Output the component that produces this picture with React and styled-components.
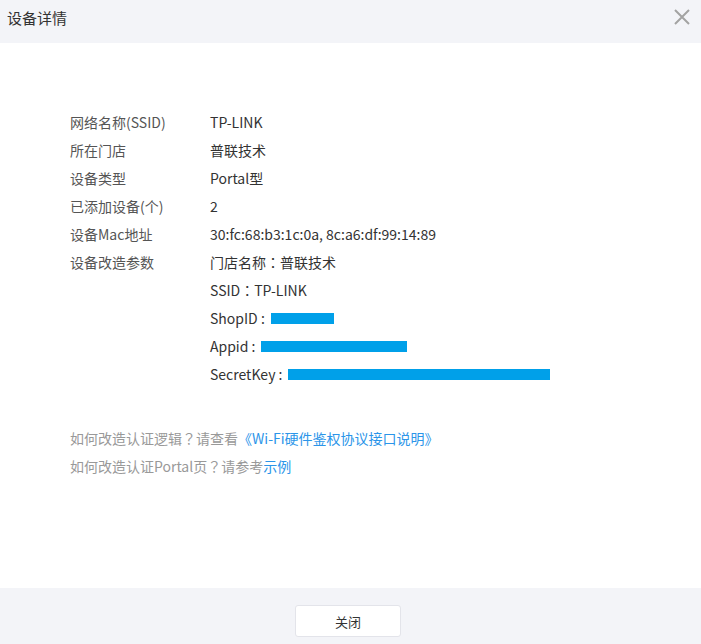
import React from 'react'
import styled, { createGlobalStyle } from 'styled-components'

const GlobalStyle = createGlobalStyle`
  html, body {
    margin: 0;
    padding: 0;
    background: #ffffff;
  }
  body {
    font-family: 'Noto Sans CJK SC', 'Noto Sans', sans-serif;
  }
`

const Dialog = styled.div`
  width: 701px;
  height: 644px;
  display: flex;
  flex-direction: column;
  background: #ffffff;
`

const Header = styled.div`
  height: 43px;
  flex: none;
  background: #f3f4f8;
  display: flex;
  align-items: center;
  justify-content: space-between;
  padding: 0 10px 0 7px;
  box-sizing: border-box;
`

const Title = styled.span`
  font-size: 15px;
  color: #333333;
  line-height: 20px;
  margin-top: -8px;
`

const CloseBtn = styled.button`
  background: transparent;
  border: none;
  padding: 0;
  width: 18px;
  height: 18px;
  margin-top: -10px;
  cursor: pointer;
  display: flex;
`

const Body = styled.div`
  flex: 1;
  padding: 65px 0 0 70px;
  box-sizing: border-box;
`

const InfoRow = styled.div`
  display: flex;
  font-size: 14px;
  line-height: 28px;
`

const Label = styled.div`
  width: 140px;
  flex: none;
  color: #555555;
`

const Value = styled.div`
  color: #333333;
  display: flex;
  flex-direction: column;
`

const Line = styled.div`
  display: flex;
  align-items: center;
  height: 28px;
`

// centred full-width punctuation, as in the original
const Punct = styled.span`
  font-family: 'Noto Sans CJK TC', sans-serif;
`

const Masked = styled.span`
  display: inline-block;
  height: 11px;
  background: #00a0e9;
  margin-left: 6px;
`

const Help = styled.div`
  margin-top: 36px;
  font-size: 14px;
  line-height: 28px;
  color: #999999;
`

const Link = styled.a`
  color: #2b95e9;
  text-decoration: none;
  cursor: pointer;
`

const Footer = styled.div`
  height: 56px;
  flex: none;
  background: #f3f4f8;
  display: flex;
  justify-content: center;
  align-items: flex-start;
  padding-top: 17px;
  box-sizing: border-box;
`

const Button = styled.button`
  width: 106px;
  height: 32px;
  background: #ffffff;
  border: 1px solid #e3e4ea;
  border-radius: 3px;
  font-family: 'Noto Sans CJK SC', sans-serif;
  font-size: 13px;
  color: #333333;
  cursor: pointer;
  margin-left: -5px;
`

const rows = [
  ['网络名称(SSID)', 'TP-LINK'],
  ['所在门店', '普联技术'],
  ['设备类型', 'Portal型'],
  ['已添加设备(个)', '2'],
  ['设备Mac地址', '30:fc:68:b3:1c:0a, 8c:a6:df:99:14:89'],
]

export default function App() {
  return (
    <>
      <GlobalStyle />
      <Dialog>
        <Header>
          <Title>设备详情</Title>
          <CloseBtn aria-label="close">
            <svg width="18" height="18" viewBox="0 0 18 18">
              <path d="M2 2 L16 16 M16 2 L2 16" stroke="#a3a3a3" strokeWidth="2" />
            </svg>
          </CloseBtn>
        </Header>
        <Body>
          {rows.map(([k, v]) => (
            <InfoRow key={k}>
              <Label>{k}</Label>
              <Value>{v}</Value>
            </InfoRow>
          ))}
          <InfoRow>
            <Label>设备改造参数</Label>
            <Value>
              <Line>
                门店名称<Punct>：</Punct>普联技术
              </Line>
              <Line>
                SSID<Punct>：</Punct>TP-LINK
              </Line>
              <Line>
                ShopID :<Masked style={{ width: 63 }} />
              </Line>
              <Line>
                Appid :<Masked style={{ width: 146 }} />
              </Line>
              <Line>
                SecretKey :<Masked style={{ width: 262 }} />
              </Line>
            </Value>
          </InfoRow>
          <Help>
            <div>
              如何改造认证逻辑<Punct>？</Punct>请查看<Link>《Wi-Fi硬件鉴权协议接口说明》</Link>
            </div>
            <div>
              如何改造认证Portal页<Punct>？</Punct>请参考<Link>示例</Link>
            </div>
          </Help>
        </Body>
        <Footer>
          <Button>关闭</Button>
        </Footer>
      </Dialog>
    </>
  )
}
